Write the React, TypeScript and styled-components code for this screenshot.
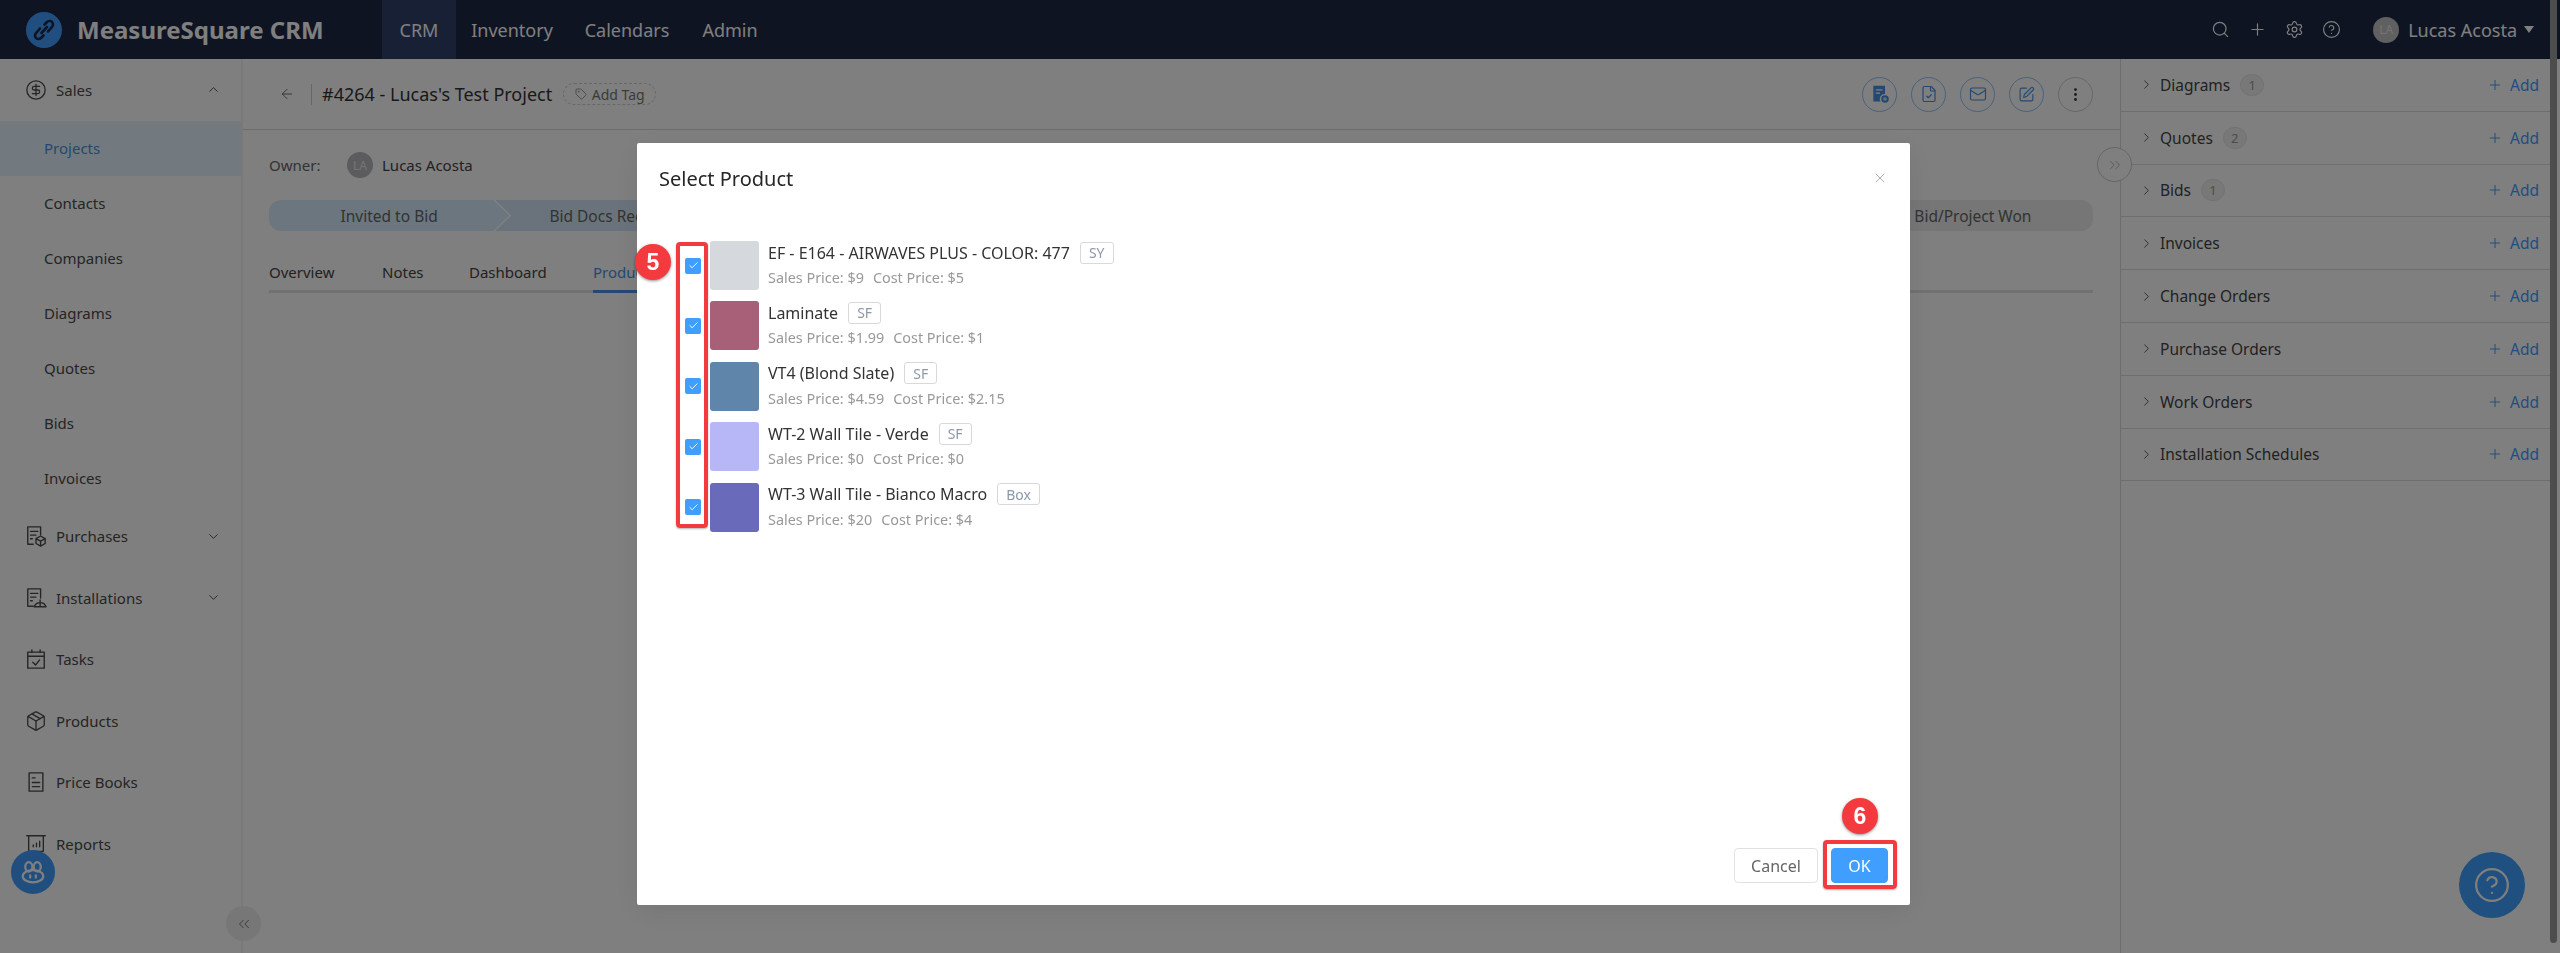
import { ReactNode } from 'react'
import styled, { createGlobalStyle } from 'styled-components'
import {
  ArrowLeft,
  Check,
  ChevronDown,
  ChevronRight,
  ChevronUp,
  ChevronsLeft,
  ChevronsRight,
  CircleDollarSign,
  CircleHelp,
  EllipsisVertical,
  FileCheck,
  Mail,
  Package,
  Plus,
  Search,
  Settings,
  SquarePen,
  Tag,
  X,
} from 'lucide-react'

const FONT = '"Noto Sans", "Open Sans", sans-serif'

const GlobalStyle = createGlobalStyle`
  html, body {
    margin: 0;
    padding: 0;
    width: 2560px;
    height: 953px;
    overflow: hidden;
    background: #fff;
    font-family: ${FONT};
  }
  * { box-sizing: border-box; }
`

const Page = styled.div`
  display: flex;
  width: 2560px;
  height: 953px;
`

const Content = styled.div`
  flex: 1 1 auto;
  min-width: 0;
  display: flex;
  flex-direction: column;
`

const ScrollTrack = styled.div`
  flex: 0 0 10px;
  background: #1e2846;
  height: 59px;
  position: relative;
`

const ScrollThumb = styled.div`
  position: absolute;
  top: 0;
  left: 0;
  width: 7px;
  height: 943px;
  border-radius: 0 0 4px 4px;
  background: #9a9a9a;
`

const TopBar = styled.header`
  flex: 0 0 59px;
  display: flex;
  align-items: center;
  background: #1e2846;
  color: #fff;
`

const Brand = styled.div`
  display: flex;
  align-items: center;
  gap: 15px;
  width: 382px;
  padding-left: 26px;
  font-size: 24px;
  font-weight: 700;
`

const NavItem = styled.div<{ $active?: boolean; $w: number }>`
  width: ${({ $w }) => $w}px;
  height: 59px;
  display: flex;
  align-items: center;
  justify-content: center;
  font-size: 18px;
  background: ${({ $active }) => ($active ? '#30406a' : 'transparent')};
`

const TopRight = styled.div`
  margin-left: auto;
  display: flex;
  align-items: center;
  padding-right: 16px;
`

const TopIcons = styled.div`
  display: flex;
  align-items: center;
  gap: 18px;
  margin-right: 32px;
`

const Avatar = styled.span<{ $bg?: string }>`
  width: 26px;
  height: 26px;
  border-radius: 50%;
  background: ${({ $bg }) => $bg ?? '#b8b8bc'};
  color: #e8e8e8;
  font-size: 12px;
  display: inline-flex;
  align-items: center;
  justify-content: center;
`

const UserName = styled.span`
  font-size: 18px;
  margin: 0 7px 0 9px;
`

const Caret = styled.span`
  width: 0;
  height: 0;
  border-left: 5.5px solid transparent;
  border-right: 5.5px solid transparent;
  border-top: 7px solid #fff;
`

const Body = styled.div`
  flex: 1 1 auto;
  min-height: 0;
  display: flex;
  position: relative;
`

const Sidebar = styled.aside`
  flex: 0 0 243px;
  border-right: 2px solid #f2f2f2;
  overflow: hidden;
  font-size: 15px;
  color: #4a4a4a;
`

const SideGroup = styled.div`
  height: 61.5px;
  display: flex;
  align-items: center;
  padding: 0 20px 0 25px;
  gap: 9px;
  & > span { flex: 1; }
`

const SideItem = styled.div<{ $active?: boolean }>`
  height: 55px;
  display: flex;
  align-items: center;
  padding-left: 44px;
  background: ${({ $active }) => ($active ? '#e6f4ff' : 'transparent')};
  color: ${({ $active }) => ($active ? '#4a90e2' : 'inherit')};
`

const CollapseButton = styled.button`
  position: absolute;
  left: 226px;
  bottom: 12px;
  width: 35px;
  height: 35px;
  padding: 0;
  border: 0;
  border-radius: 50%;
  background: #eeeeee;
  color: #666;
  display: flex;
  align-items: center;
  justify-content: center;
`

const ChatBubble = styled.div`
  position: absolute;
  left: 11px;
  top: 791px;
  width: 44px;
  height: 44px;
  border-radius: 50%;
  background: #409eff;
  display: flex;
  align-items: center;
  justify-content: center;
`

const Main = styled.main`
  flex: 0 0 877px;
  flex-grow: 1;
  min-width: 0;
`

const MainHeader = styled.div`
  height: 71px;
  border-bottom: 1px solid #d9d9d9;
  display: flex;
  align-items: center;
  padding: 0 27px 0 36px;
  color: #444;
`

const BackDivider = styled.span`
  width: 1px;
  height: 21px;
  background: #cfcfcf;
  margin: 0 10px 0 16px;
`

const Title = styled.h1`
  margin: 0;
  font-size: 18px;
  font-weight: 400;
  color: #333;
`

const AddTag = styled.span`
  margin-left: 11px;
  height: 22px;
  width: 93px;
  justify-content: center;
  border: 1px dashed #d0d0d0;
  border-radius: 11px;
  display: inline-flex;
  align-items: center;
  gap: 5px;
  font-size: 14px;
  color: #777;
`

const Actions = styled.div`
  margin-left: auto;
  display: flex;
  gap: 14px;
`

const RoundAction = styled.span<{ $plain?: boolean }>`
  width: 35px;
  height: 35px;
  border-radius: 50%;
  border: 1px solid ${({ $plain }) => ($plain ? '#cfcfcf' : '#8fc4f8')};
  color: ${({ $plain }) => ($plain ? '#333' : '#4a90e2')};
  display: flex;
  align-items: center;
  justify-content: center;
`

const Section = styled.div`
  padding: 0 27px 0 26px;
`

const OwnerRow = styled.div`
  height: 70px;
  display: flex;
  align-items: center;
  font-size: 15px;
  color: #444;
  & > span:first-child { width: 78px; color: #666; }
  & > span:last-child { margin-left: 9px; }
`

const Stages = styled.div`
  height: 31px;
  display: flex;
  border-radius: 12px;
  overflow: hidden;
`

const Stage = styled.div<{ $tone: string }>`
  flex: 1 1 0;
  margin-right: -14px;
  background: ${({ $tone }) => $tone};
  clip-path: polygon(0 0, calc(100% - 16px) 0, 100% 50%, calc(100% - 16px) 100%, 0 100%, 16px 50%);
  display: flex;
  align-items: center;
  justify-content: center;
  white-space: nowrap;
  font-size: 15.5px;
  color: #666;
  &:first-child { clip-path: polygon(0 0, calc(100% - 16px) 0, 100% 50%, calc(100% - 16px) 100%, 0 100%); }
  &:last-child { margin-right: 0; clip-path: polygon(0 0, 100% 0, 100% 100%, 0 100%, 16px 50%); }
`

const Tabs = styled.div`
  margin-top: 26px;
  height: 36px;
  display: flex;
  border-bottom: 3px solid #e2e2e6;
  font-size: 15px;
  color: #444;
`

const TabLabel = styled.div<{ $w: number; $active?: boolean }>`
  width: ${({ $w }) => $w}px;
  line-height: 30px;
  height: 36px;
  color: ${({ $active }) => ($active ? '#4a90e2' : 'inherit')};
  border-bottom: 3px solid ${({ $active }) => ($active ? '#4a90e2' : 'transparent')};
`

const RightPanel = styled.aside`
  flex: 0 0 430px;
  border-left: 1px solid #d9d9d9;
`

const PanelRow = styled.div`
  height: 52.8px;
  display: flex;
  align-items: center;
  padding: 0 11px 0 18px;
  border-bottom: 1px solid #dcdcdc;
  font-size: 15.5px;
  color: #444;
`

const Count = styled.span`
  margin-left: 10px;
  width: 24px;
  height: 22px;
  border-radius: 11px;
  background: #f0f0f0;
  border: 1px solid #e6e6e6;
  color: #999;
  font-size: 13px;
  display: flex;
  align-items: center;
  justify-content: center;
`

const PanelName = styled.span`
  margin-left: 6px;
`

const PanelAdd = styled.span`
  margin-left: auto;
  display: flex;
  align-items: center;
  gap: 7px;
  color: #409eff;
`

const ExpandButton = styled.span`
  position: absolute;
  left: 2097px;
  top: 88px;
  width: 35px;
  height: 35px;
  border-radius: 50%;
  border: 1px solid #cccccc;
  background: #fff;
  color: #aaa;
  display: flex;
  align-items: center;
  justify-content: center;
`

const HelpFab = styled.div`
  position: fixed;
  left: 2459px;
  top: 852px;
  width: 66px;
  height: 66px;
  border-radius: 50%;
  background: #3ea0ff;
  color: #fff;
  display: flex;
  align-items: center;
  justify-content: center;
`

const Overlay = styled.div`
  position: fixed;
  inset: 0;
  background: rgba(0, 0, 0, 0.5);
  display: flex;
  justify-content: center;
  padding: 143px 13px 0 0;
`

const Modal = styled.div`
  position: relative;
  width: 1273px;
  height: 762px;
  background: #fff;
  border-radius: 2px;
  display: flex;
  flex-direction: column;
  box-shadow: 0 6px 30px rgba(0, 0, 0, 0.08);
`

const ModalHeader = styled.div`
  flex: 0 0 70px;
  display: flex;
  align-items: center;
  justify-content: space-between;
  padding: 0 22px 0 22px;
  color: #999;
`

const ModalTitle = styled.div`
  font-size: 20px;
  color: #262626;
`

const ProductList = styled.div`
  flex: 1 1 auto;
  padding: 28px 0 0 48px;
  display: flex;
  flex-direction: column;
  gap: 11.4px;
`

const ProductRow = styled.div`
  display: flex;
  align-items: center;
  height: 49px;
`

const CheckBox = styled.span`
  flex: 0 0 16px;
  height: 16px;
  margin-right: 9px;
  border-radius: 2px;
  background: #409eff;
  color: #fff;
  display: flex;
  align-items: center;
  justify-content: center;
`

const Swatch = styled.span<{ $color: string }>`
  flex: 0 0 49px;
  height: 49px;
  margin-right: 9px;
  border-radius: 3px;
  background: ${({ $color }) => $color};
`

const ProductText = styled.div`
  display: flex;
  flex-direction: column;
`

const ProductName = styled.div`
  height: 24px;
  display: flex;
  align-items: center;
  font-size: 16px;
  color: #333;
`

const UnitTag = styled.span`
  margin-left: 10px;
  height: 22px;
  padding: 0 8px;
  border: 1px solid #d9d9d9;
  border-radius: 3px;
  display: flex;
  align-items: center;
  font-size: 14px;
  color: #8c98a8;
`

const ProductPrice = styled.div`
  height: 26px;
  display: flex;
  align-items: center;
  gap: 9px;
  font-size: 14.4px;
  color: #999;
`

const ModalFooter = styled.div`
  flex: 0 0 57px;
  display: flex;
  justify-content: flex-end;
  align-items: flex-start;
  gap: 13px;
  padding-right: 22px;
`

const FooterButton = styled.button<{ $primary?: boolean }>`
  height: 35px;
  width: ${({ $primary }) => ($primary ? 57 : 84)}px;
  border-radius: 4px;
  border: 1px solid ${({ $primary }) => ($primary ? '#409eff' : '#e0e0e6')};
  background: ${({ $primary }) => ($primary ? '#409eff' : '#fff')};
  color: ${({ $primary }) => ($primary ? '#fff' : '#666')};
  font-family: ${FONT};
  font-size: 16px;
  padding: 0;
`

const Highlight = styled.div<{ $l: number; $t: number; $w: number; $h: number }>`
  position: absolute;
  left: ${({ $l }) => $l}px;
  top: ${({ $t }) => $t}px;
  width: ${({ $w }) => $w}px;
  height: ${({ $h }) => $h}px;
  border: 4px solid #f33b3f;
  border-radius: 4px;
  box-shadow: 0 1px 2px rgba(0, 0, 0, 0.3);
`

const StepBadge = styled.div<{ $l: number; $t: number }>`
  position: absolute;
  left: ${({ $l }) => $l}px;
  top: ${({ $t }) => $t}px;
  width: 36px;
  height: 36px;
  border-radius: 50%;
  background: #f33b3f;
  color: #fff;
  font-family: 'Liberation Sans', sans-serif;
  font-size: 23px;
  font-weight: 700;
  display: flex;
  align-items: center;
  justify-content: center;
  box-shadow: 0 1px 3px rgba(0, 0, 0, 0.45);
`

const PRODUCTS = [
  { name: 'EF - E164 - AIRWAVES PLUS - COLOR: 477', unit: 'SY', sales: '$9', cost: '$5', color: '#d5d8dd' },
  { name: 'Laminate', unit: 'SF', sales: '$1.99', cost: '$1', color: '#a86078' },
  { name: 'VT4 (Blond Slate)', unit: 'SF', sales: '$4.59', cost: '$2.15', color: '#5f85ab' },
  { name: 'WT-2 Wall Tile - Verde', unit: 'SF', sales: '$0', cost: '$0', color: '#b7b7f8' },
  { name: 'WT-3 Wall Tile - Bianco Macro', unit: 'Box', sales: '$20', cost: '$4', color: '#6a6aba' },
]

const PANEL_ROWS: { name: string; count?: number }[] = [
  { name: 'Diagrams', count: 1 },
  { name: 'Quotes', count: 2 },
  { name: 'Bids', count: 1 },
  { name: 'Invoices' },
  { name: 'Change Orders' },
  { name: 'Purchase Orders' },
  { name: 'Work Orders' },
  { name: 'Installation Schedules' },
]

const SUB_ITEMS = ['Contacts', 'Companies', 'Diagrams', 'Quotes', 'Bids', 'Invoices']

const SvgIcon = ({ children, size = 22 }: { children: ReactNode; size?: number }) => (
  <svg
    width={size}
    height={size}
    viewBox="0 0 24 24"
    fill="none"
    stroke="currentColor"
    strokeWidth={1.5}
    strokeLinecap="round"
    strokeLinejoin="round"
  >
    {children}
  </svg>
)

const LogoIcon = () => (
  <svg width="36" height="36" viewBox="0 0 36 36">
    <circle cx="18" cy="18" r="18" fill="#409eff" />
    <g fill="none" stroke="#1e2846" strokeWidth="2.6" strokeLinecap="round">
      <path d="M18.5 12.5 L21 10 a3.4 3.4 0 0 1 5 4.8 L22 19.5" />
      <path d="M17.5 23.5 L15 26 a3.4 3.4 0 0 1 -5 -4.8 L14 16.5" />
      <path d="M15.5 21 L21 15" />
    </g>
  </svg>
)

const PurchasesIcon = () => (
  <SvgIcon>
    <path d="M9 21H3V2h14v9" />
    <path d="M6 7h8M6 11h6M6 15h2" />
    <path d="M17 12l5 2.8v5.4L17 23l-5-2.8v-5.4zM12 14.8l5 2.8 5-2.8M17 17.6V23" />
  </SvgIcon>
)

const InstallationsIcon = () => (
  <SvgIcon>
    <path d="M9 21H3V2h14v10" />
    <path d="M6 7h8M6 11h6M6 15h2" />
    <path d="M10 21.5a7 7 0 0 1 13 0zM16.5 14v7.5" />
  </SvgIcon>
)

const TasksIcon = () => (
  <SvgIcon>
    <path d="M3 4.5h18V22H3zM3 9h18M7.5 2v3M16.5 2v3M8.5 15.5l3 3 4.5-5.5" />
  </SvgIcon>
)

const PriceBookIcon = () => (
  <SvgIcon>
    <path d="M4.5 2h15v20h-15zM8 7.5h3M8 12.5h8M8 17h8" />
  </SvgIcon>
)

const ReportsIcon = () => (
  <SvgIcon>
    <path d="M2 3h20M4 3v17h16V3M9 15v-2M12.5 15v-4M16 15V9" />
  </SvgIcon>
)

const FileAddIcon = () => (
  <svg width="20" height="20" viewBox="0 0 24 24" fill="currentColor">
    <path d="M4 2h14v10a6 6 0 0 0-5.5 9H4z" />
    <circle cx="18" cy="18" r="4.5" />
    <path d="M7 7h8M7 11h5" stroke="#fff" strokeWidth="1.6" />
    <path d="M18 15.8v4.4M15.8 18h4.4" stroke="#fff" strokeWidth="1.2" />
  </svg>
)

const BotIcon = () => (
  <svg width="28" height="28" viewBox="0 0 30 30" fill="none" stroke="#fff" strokeWidth="2.4">
    <ellipse cx="15" cy="19.5" rx="11" ry="6.5" />
    <ellipse cx="10.5" cy="9.5" rx="3.8" ry="5" />
    <ellipse cx="19.5" cy="9.5" rx="3.8" ry="5" />
    <path d="M12 18.5v2.5M18 18.5v2.5" strokeLinecap="round" />
  </svg>
)

const App = () => (
  <>
    <GlobalStyle />
    <Page>
      <Content>
        <TopBar>
          <Brand>
            <LogoIcon />
            MeasureSquare CRM
          </Brand>
          <NavItem $active $w={74}>CRM</NavItem>
          <NavItem $w={112}>Inventory</NavItem>
          <NavItem $w={118}>Calendars</NavItem>
          <NavItem $w={88}>Admin</NavItem>
          <TopRight>
            <TopIcons>
              <Search size={19} strokeWidth={1.5} />
              <Plus size={19} strokeWidth={1.5} />
              <Settings size={19} strokeWidth={1.5} />
              <CircleHelp size={19} strokeWidth={1.5} />
            </TopIcons>
            <Avatar $bg="#c0c0c0">LA</Avatar>
            <UserName>Lucas Acosta</UserName>
            <Caret />
          </TopRight>
        </TopBar>
        <Body>
          <Sidebar>
            <SideGroup>
              <CircleDollarSign size={22} strokeWidth={1.4} />
              <span>Sales</span>
              <ChevronUp size={15} strokeWidth={1.5} />
            </SideGroup>
            <SideItem $active>Projects</SideItem>
            {SUB_ITEMS.map(name => (
              <SideItem key={name}>{name}</SideItem>
            ))}
            <SideGroup>
              <PurchasesIcon />
              <span>Purchases</span>
              <ChevronDown size={15} strokeWidth={1.5} />
            </SideGroup>
            <SideGroup>
              <InstallationsIcon />
              <span>Installations</span>
              <ChevronDown size={15} strokeWidth={1.5} />
            </SideGroup>
            <SideGroup>
              <TasksIcon />
              <span>Tasks</span>
            </SideGroup>
            <SideGroup>
              <Package size={22} strokeWidth={1.4} />
              <span>Products</span>
            </SideGroup>
            <SideGroup>
              <PriceBookIcon />
              <span>Price Books</span>
            </SideGroup>
            <SideGroup>
              <ReportsIcon />
              <span>Reports</span>
            </SideGroup>
          </Sidebar>
          <CollapseButton>
            <ChevronsLeft size={18} strokeWidth={1.2} />
          </CollapseButton>
          <ChatBubble>
            <BotIcon />
          </ChatBubble>
          <Main>
            <MainHeader>
              <ArrowLeft size={16} strokeWidth={1.4} color="#666" />
              <BackDivider />
              <Title>#4264 - Lucas's Test Project</Title>
              <AddTag>
                <Tag size={12} strokeWidth={1.5} />
                Add Tag
              </AddTag>
              <Actions>
                <RoundAction><FileAddIcon /></RoundAction>
                <RoundAction><FileCheck size={18} strokeWidth={1.6} /></RoundAction>
                <RoundAction><Mail size={18} strokeWidth={1.6} /></RoundAction>
                <RoundAction><SquarePen size={17} strokeWidth={1.6} /></RoundAction>
                <RoundAction $plain><EllipsisVertical size={17} /></RoundAction>
              </Actions>
            </MainHeader>
            <Section>
              <OwnerRow>
                <span>Owner:</span>
                <Avatar>LA</Avatar>
                <span>Lucas Acosta</span>
              </OwnerRow>
              <Stages>
                <Stage $tone="#d8ecff">Invited to Bid</Stage>
                <Stage $tone="#d4e6f6">Bid Docs Received</Stage>
                <Stage $tone="#ececec" />
                <Stage $tone="#ececec" />
                <Stage $tone="#ececec" />
                <Stage $tone="#ececec" />
                <Stage $tone="#ececec" />
                <Stage $tone="#ececec">Bid/Project Won</Stage>
              </Stages>
              <Tabs>
                <TabLabel $w={113}>Overview</TabLabel>
                <TabLabel $w={87}>Notes</TabLabel>
                <TabLabel $w={124}>Dashboard</TabLabel>
                <TabLabel $w={120} $active>Products</TabLabel>
              </Tabs>
            </Section>
          </Main>
          <RightPanel>
            {PANEL_ROWS.map(row => (
              <PanelRow key={row.name}>
                <ChevronRight size={15} strokeWidth={1.5} color="#555" />
                <PanelName>{row.name}</PanelName>
                {row.count !== undefined && <Count>{row.count}</Count>}
                <PanelAdd>
                  <Plus size={16} strokeWidth={1.5} />
                  Add
                </PanelAdd>
              </PanelRow>
            ))}
          </RightPanel>
          <ExpandButton>
            <ChevronsRight size={18} strokeWidth={1.2} />
          </ExpandButton>
        </Body>
      </Content>
      <ScrollTrack>
        <ScrollThumb />
      </ScrollTrack>
    </Page>
    <HelpFab>
      <CircleHelp size={38} strokeWidth={1.4} />
    </HelpFab>
    <Overlay>
      <Modal>
        <ModalHeader>
          <ModalTitle>Select Product</ModalTitle>
          <X size={16} strokeWidth={1.2} />
        </ModalHeader>
        <ProductList>
          {PRODUCTS.map(product => (
            <ProductRow key={product.name}>
              <CheckBox>
                <Check size={11} strokeWidth={2} />
              </CheckBox>
              <Swatch $color={product.color} />
              <ProductText>
                <ProductName>
                  {product.name}
                  <UnitTag>{product.unit}</UnitTag>
                </ProductName>
                <ProductPrice>
                  <span>Sales Price: {product.sales}</span>
                  <span>Cost Price: {product.cost}</span>
                </ProductPrice>
              </ProductText>
            </ProductRow>
          ))}
        </ProductList>
        <ModalFooter>
          <FooterButton>Cancel</FooterButton>
          <FooterButton $primary>OK</FooterButton>
        </ModalFooter>
        <Highlight $l={39} $t={99} $w={32} $h={286} />
        <StepBadge $l={-2} $t={101}>5</StepBadge>
        <Highlight $l={1186} $t={697} $w={74} $h={49} />
        <StepBadge $l={1205} $t={655}>6</StepBadge>
      </Modal>
    </Overlay>
  </>
)

export default App
